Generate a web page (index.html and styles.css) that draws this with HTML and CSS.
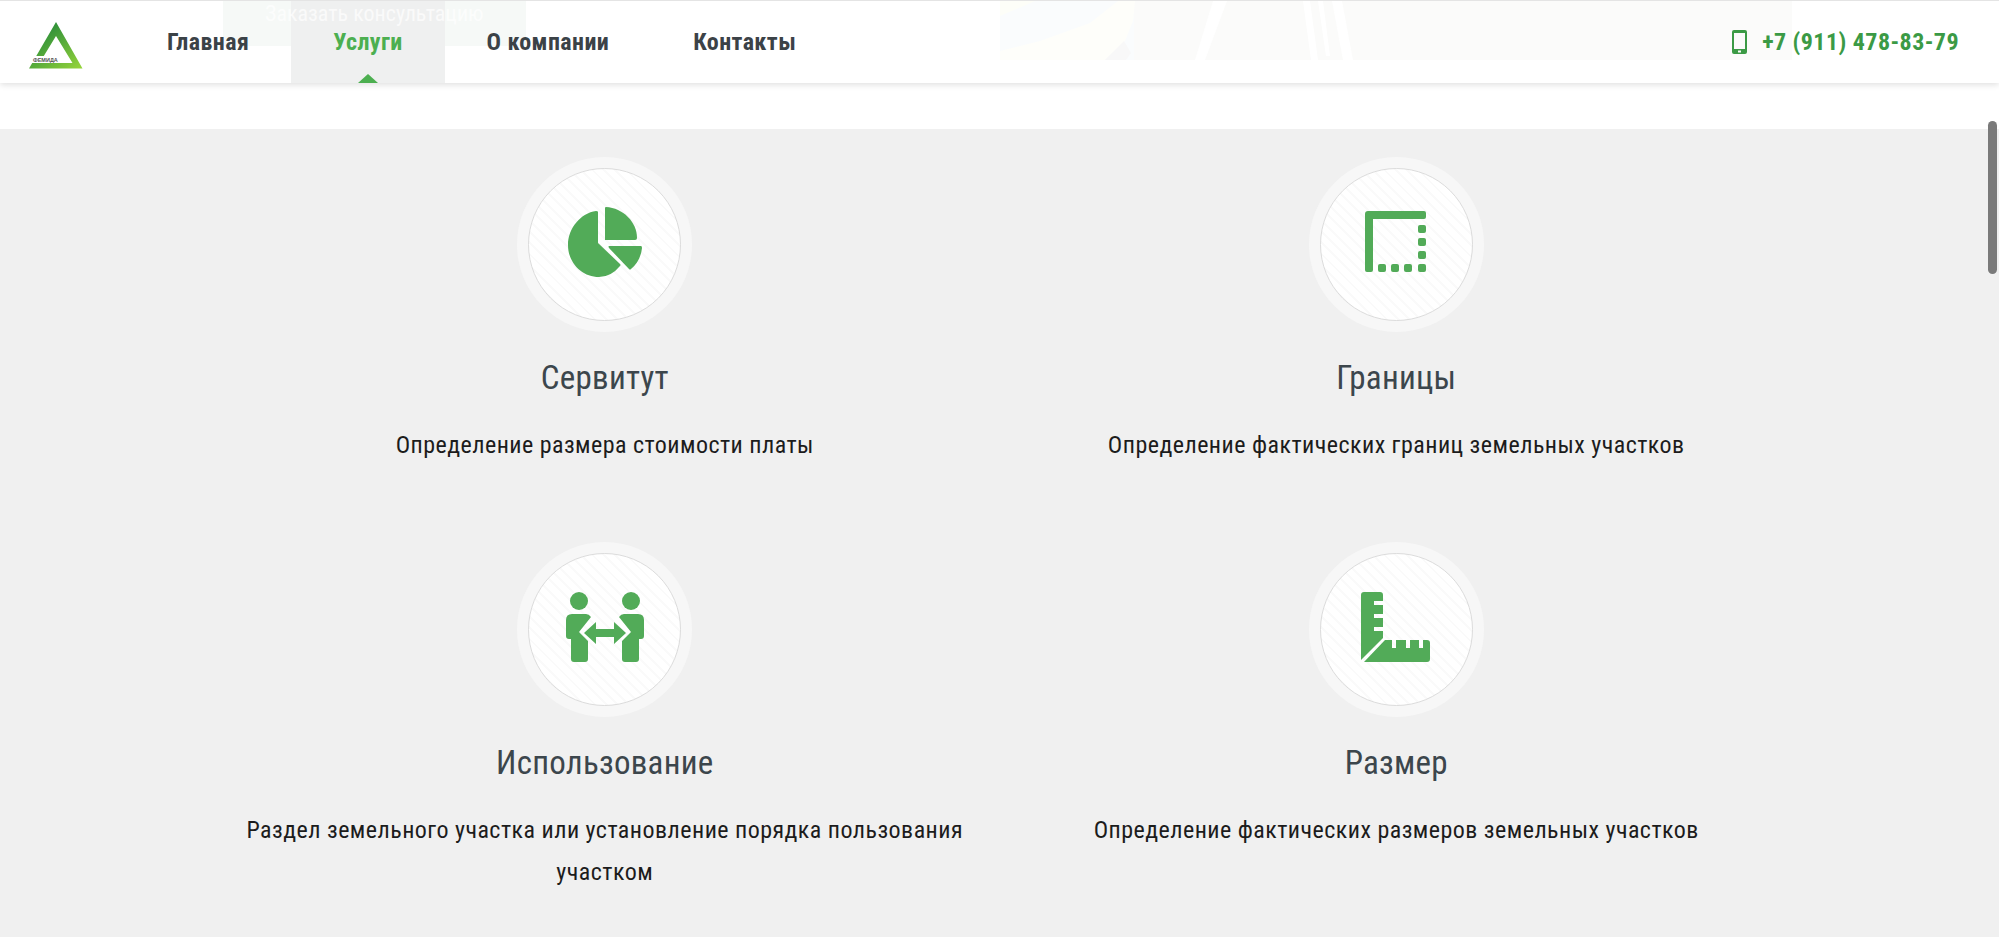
FILE: index.html
```html
<!DOCTYPE html>
<html lang="ru">
<head>
<meta charset="UTF-8">
<meta name="viewport" content="width=device-width, initial-scale=1.0">
<title>Услуги</title>
<link rel="stylesheet" href="styles.css">
</head>
<body>
<header class="topbar">
    <div class="hero-strip-left"></div>
    <svg class="hero-strip-right" viewBox="0 0 792 59" width="792" height="59">
        <rect width="792" height="59" fill="#fbfbfa"/>
        <rect width="134" height="59" fill="#fafcfd"/>
        <path fill="#fefefa" d="M0 50 L40 40 L90 22 L118 0 L135 0 L133 20 L125 40 L105 59 L0 59 Z"/>
        <path fill="#fdfef8" d="M0 0 H35 L0 15 Z"/>
        <path fill="#f8f8f8" d="M124 40 L131 52 L126 59 L105 59 Z"/>
        <path fill="#fff" d="M213 0 H227 L205 59 H195 Z"/>
        <path fill="#fff" d="M303 0 H310 L318 59 H311 Z"/>
        <path fill="#fff" d="M318 0 H323 L330 55 H326 Z"/>
        <path fill="#fff" d="M332 0 H342 L353 59 H343 Z"/>
    </svg>
    <a class="logo" href="#">
        <svg viewBox="0 0 54 47" width="54" height="47">
            <defs>
                <linearGradient id="logoGrad" x1="0.2" y1="0.1" x2="1" y2="1">
                    <stop offset="0" stop-color="#23883a"/>
                    <stop offset="1" stop-color="#97d53a"/>
                </linearGradient>
            </defs>
            <path fill="url(#logoGrad)" fill-rule="evenodd" d="M27 0 L53.500 46.500 L0 46.500 Z M27 14 L43.500 41 L10.500 41 Z"/>
            <rect x="3" y="34" width="26" height="7" fill="#fff"/>
            <text class="logo-text" x="4" y="40">ФЕМИДА</text>
        </svg>
    </a>
    <nav class="menu">
        <a href="#">Главная</a>
        <a href="#" class="active">Услуги</a>
        <a href="#">О компании</a>
        <a href="#">Контакты</a>
    </nav>
    <div class="hero-label">Заказать консультацию</div>
    <div class="phone">
        <svg viewBox="0 0 15 24" width="15" height="24">
            <path fill="#3b9a45" fill-rule="evenodd" d="M2 0 H13 A2 2 0 0 1 15 2 V22 A2 2 0 0 1 13 24 H2 A2 2 0 0 1 0 22 V2 A2 2 0 0 1 2 0 Z M2 3 V19 H13 V3 Z M6 20.500 V22.500 H9 V20.500 Z"/>
        </svg>
        <span>+7 (911) 478-83-79</span>
    </div>
</header>

<main class="services-band">
    <section class="services">
        <div class="service">
            <div class="ring"><div class="disc">
                <svg viewBox="0 0 74 70" width="74" height="70">
                    <path d="M30 5 V36 L52 57 Q53 58 52 59 Q43 70 31 70 C14 70 0 56 0 38 C0 21 13 6 28 4 Q30 4 30 5 Z"/>
                    <path d="M37 1 Q37 0 38 0 C55 1 69 15 69 31 Q69 33 67 33 H37 Z"/>
                    <path d="M41 39 H73 Q74 39 74 41 C73 50 69 57 63 62 Q62 63 61 62 L41 41 Q40 39 41 39 Z"/>
                </svg>
            </div></div>
            <h3>Сервитут</h3>
            <p>Определение размера стоимости платы</p>
        </div>
        <div class="service">
            <div class="ring"><div class="disc">
                <svg viewBox="0 0 62 62" width="62" height="62">
                    <path d="M3 0 H59 Q61 0 61 2 V6 Q61 8 59 8 H8 V59 Q8 61 6 61 H2 Q0 61 0 59 V3 Q0 0 3 0 Z"/>
                    <rect x="53" y="14" width="8" height="8" rx="2"/>
                    <rect x="53" y="27" width="8" height="8" rx="2"/>
                    <rect x="53" y="40" width="8" height="8" rx="2"/>
                    <rect x="53" y="53" width="8" height="8" rx="2"/>
                    <rect x="13" y="53" width="8" height="8" rx="2"/>
                    <rect x="26" y="53" width="8" height="8" rx="2"/>
                    <rect x="39" y="53" width="8" height="8" rx="2"/>
                </svg>
            </div></div>
            <h3>Границы</h3>
            <p>Определение фактических границ земельных участков</p>
        </div>
        <div class="service">
            <div class="ring"><div class="disc">
                <svg viewBox="0 0 78 70" width="78" height="70">
                    <circle cx="13" cy="9" r="9"/>
                    <circle cx="65" cy="9" r="9"/>
                    <path d="M6 22 H20 Q23 22 25 25 L13 40 L22 49 V67 Q22 70 19 70 H8 Q5 70 5 67 V47 H3 Q0 47 0 44 V28 Q0 22 6 22 Z"/>
                    <path d="M72 22 H58 Q55 22 53 25 L65 40 L56 49 V67 Q56 70 59 70 H70 Q73 70 73 67 V47 H75 Q78 47 78 44 V28 Q78 22 72 22 Z"/>
                    <path d="M30 30 V37 H48 V30 L60 41 L48 52 V45 H30 V52 L18 41 Z"/>
                </svg>
            </div></div>
            <h3>Использование</h3>
            <p>Раздел земельного участка или установление порядка пользования участком</p>
        </div>
        <div class="service">
            <div class="ring"><div class="disc">
                <svg viewBox="0 0 70 70" width="70" height="70">
                    <path d="M3 0 H19 Q22 0 22 3 V9 H13 V13 H22 V22 H13 V26 H22 V35 H13 V39 H22 V46 L0 68 V3 Q0 0 3 0 Z"/>
                    <path d="M24 48 H31 V56 H35 V48 H45 V56 H49 V48 H58 V56 H62 V48 H66 Q69 48 69 51 V67 Q69 70 66 70 H3 Z"/>
                </svg>
            </div></div>
            <h3>Размер</h3>
            <p>Определение фактических размеров земельных участков</p>
        </div>
    </section>
</main>

<div class="scroll-thumb"></div>
</body>
</html>
```

FILE: styles.css
```css
html, body {
    height: 100%;
}
body {
    margin: 0;
    overflow: hidden;
    background: #fff;
    font-family: "Roboto", "Liberation Sans", sans-serif;
    font-stretch: condensed;
    color: #363c40;
}
a {
    color: inherit;
    text-decoration: none;
}
.topbar {
    position: relative;
    height: 82px;
    display: flex;
    align-items: center;
    border-top: 1px solid #e4e4e4;
    background: #fff;
    box-shadow: 0 2px 6px rgba(0, 0, 0, 0.12);
    z-index: 2;
}
.hero-strip-left {
    position: absolute;
    top: 0;
    left: 223px;
    width: 303px;
    height: 45px;
    background: #f6f9f7;
}
.hero-label {
    position: absolute;
    top: 0;
    left: 265px;
    font-size: 22px;
    line-height: 26px;
    color: rgba(255, 255, 255, 0.7);
}
.hero-strip-right {
    position: absolute;
    top: 0;
    left: 1000px;
    display: block;
}
.logo {
    position: relative;
    margin-left: 29px;
    width: 54px;
    height: 47px;
    margin-top: 6px;
    margin-right: 42px;
}
.logo svg {
    display: block;
}
.logo-text {
    font-family: "Liberation Sans", sans-serif;
    font-size: 5.500px;
    font-weight: 700;
    fill: #555;
}
.menu {
    position: relative;
    display: flex;
    height: 100%;
}
.menu a {
    position: relative;
    display: flex;
    align-items: center;
    padding: 0 42px;
    font-size: 24px;
    font-weight: 700;
    letter-spacing: 0.4px;
    color: #3b4247;
}
.menu a.active {
    color: #4caf50;
    background: #eff0f0;
}
.menu a.active::after {
    content: "";
    position: absolute;
    bottom: 0;
    left: 50%;
    margin-left: -10px;
    border-left: 10px solid transparent;
    border-right: 10px solid transparent;
    border-bottom: 9px solid #4caf50;
}
.phone {
    position: relative;
    margin-left: auto;
    margin-right: 40px;
    display: flex;
    align-items: center;
    gap: 15px;
    font-size: 24px;
    font-weight: 700;
    letter-spacing: 0.45px;
    color: #3b9a45;
}
.phone svg {
    display: block;
}
.services-band {
    height: 808px;
    margin-top: 46px;
    padding-top: 28px;
    box-sizing: border-box;
    background: #f0f0f0;
}
.services {
    width: 1583px;
    margin-left: 209px;
    display: grid;
    grid-template-columns: 1fr 1fr;
    grid-auto-rows: 385px;
    text-align: center;
}
.service {
    padding: 0 30px;
}
.ring {
    width: 175px;
    height: 175px;
    margin: 0 auto;
    padding: 11px;
    box-sizing: border-box;
    border-radius: 50%;
    background: #f7f7f7;
}
.disc {
    height: 100%;
    box-sizing: border-box;
    padding-bottom: 5px;
    display: flex;
    align-items: center;
    justify-content: center;
    border: 1px solid #dcdcdc;
    border-radius: 50%;
    background: repeating-linear-gradient(45deg, #fff 0, #fff 6px, #fafafa 6px, #fafafa 8px);
}
.disc svg {
    display: block;
    fill: #52ab58;
}
.service h3 {
    margin: 26px 0 0;
    font-size: 33px;
    line-height: 40px;
    font-weight: 400;
    letter-spacing: 0.25px;
    color: #3c464c;
}
.service p {
    margin: 26px 0 0;
    font-size: 24px;
    line-height: 42px;
    letter-spacing: 0.46px;
    color: #1c1c1c;
}
.scroll-thumb {
    position: absolute;
    top: 121px;
    right: 2px;
    width: 9px;
    height: 153px;
    border-radius: 5px;
    background: #7a7a7a;
}
```
